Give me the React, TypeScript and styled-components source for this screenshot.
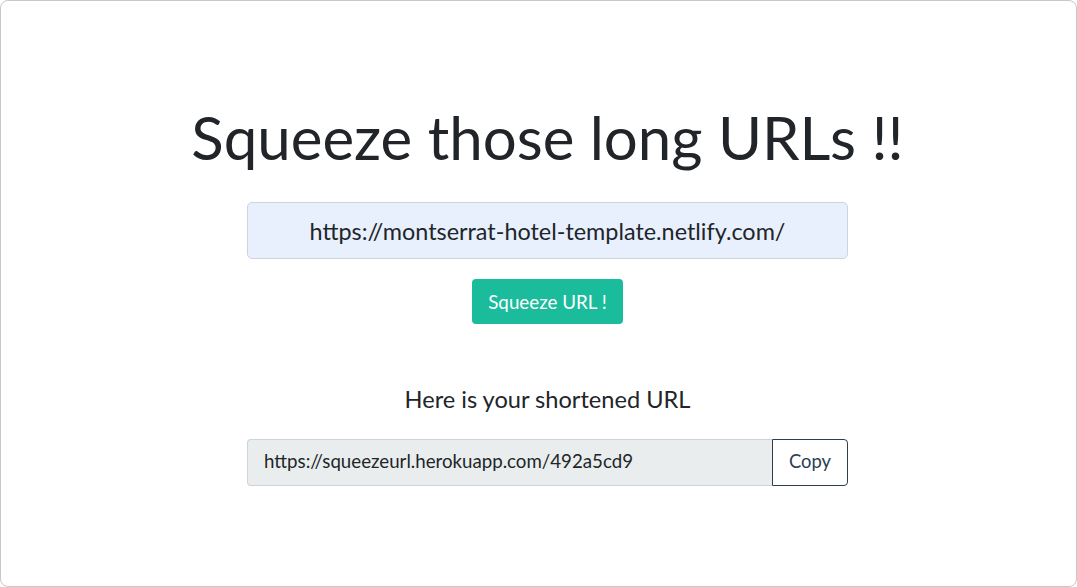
import React from "react";
import styled, { createGlobalStyle } from "styled-components";

const Global = createGlobalStyle`
  html, body { margin: 0; padding: 0; background: #ffffff; }
  * { box-sizing: border-box; }
  body { font-family: Lato, "Open Sans", sans-serif; color: #212529; }
`;

const Frame = styled.div`
  width: 1077px;
  height: 587px;
  border: 1px solid #c8c8c8;
  border-radius: 8px;
  background: #fff;
  display: flex;
  flex-direction: column;
  align-items: center;
  padding: 100px 0 0 18px;
`;

const Title = styled.h1`
  margin: 0;
  font-size: 60px;
  font-weight: 400;
  line-height: 1.2;
  color: #212529;
`;

const UrlInput = styled.input`
  margin-top: 29px;
  width: 601px;
  height: 57px;
  border: 1px solid #ced4da;
  border-radius: 5px;
  background: #e8f0fe;
  text-align: center;
  font-family: Lato, sans-serif;
  font-size: 23.4px;
  color: #212529;
  outline: none;
`;

const SqueezeButton = styled.button`
  margin-top: 20px;
  width: 151px;
  height: 45px;
  border: none;
  border-radius: 4px;
  background: #1abc9c;
  color: #fff;
  font-family: Lato, sans-serif;
  font-size: 18.8px;
`;

const Subtitle = styled.p`
  margin: 61px 0 0;
  font-size: 23.6px;
  line-height: 1.2;
  color: #212529;
`;

const Group = styled.div`
  margin-top: 26px;
  width: 601px;
  height: 47px;
  display: flex;
`;

const ResultInput = styled.input`
  flex: 1;
  min-width: 0;
  height: 100%;
  border: 1px solid #ced4da;
  border-right: none;
  border-radius: 4px 0 0 4px;
  background: #eaeded;
  padding: 0 16px 3px;
  font-family: Lato, sans-serif;
  font-size: 18.7px;
  color: #212529;
  outline: none;
`;

const CopyButton = styled.button`
  width: 76px;
  height: 100%;
  border: 1px solid #2c3e50;
  border-radius: 0 4px 4px 0;
  background: #fff;
  color: #2c3e50;
  padding: 0 0 3px;
  font-family: Lato, sans-serif;
  font-size: 18.4px;
`;

export default function App() {
  return (
    <>
      <Global />
      <Frame>
        <Title>Squeeze those long URLs !!</Title>
        <UrlInput readOnly value="https://montserrat-hotel-template.netlify.com/" />
        <SqueezeButton>Squeeze URL !</SqueezeButton>
        <Subtitle>Here is your shortened URL</Subtitle>
        <Group>
          <ResultInput readOnly value="https://squeezeurl.herokuapp.com/492a5cd9" />
          <CopyButton>Copy</CopyButton>
        </Group>
      </Frame>
    </>
  );
}
